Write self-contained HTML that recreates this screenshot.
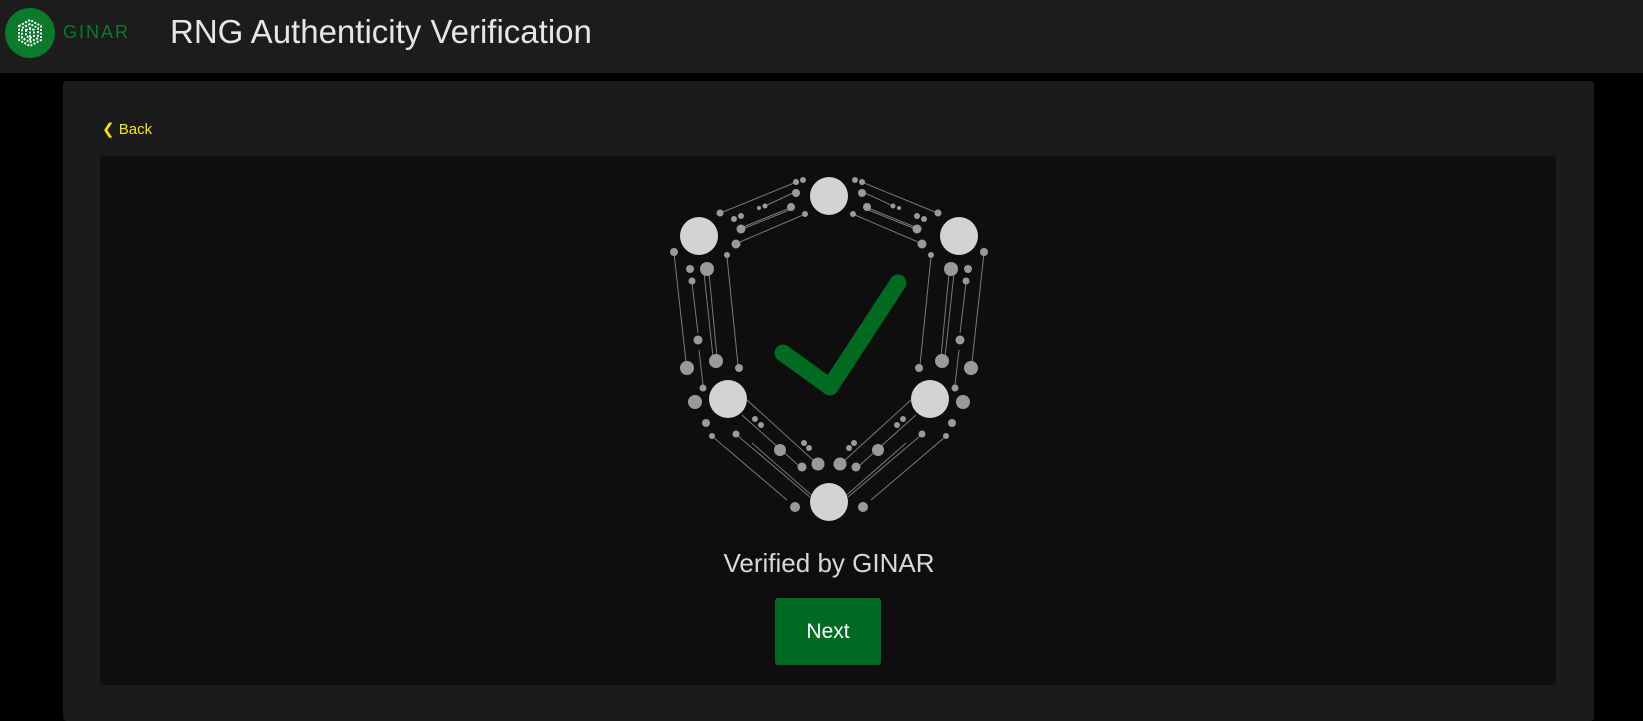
<!DOCTYPE html>
<html><head><style>
body{margin:0;width:1643px;height:716px;background:#000;overflow:hidden;font-family:"Liberation Sans",Roboto,sans-serif;position:relative}
.hdr{position:absolute;left:0;top:0;width:1643px;height:73px;background:#1c1c1c}
.logo{position:absolute;left:5px;top:8px;width:50px;height:50px;border-radius:50%;background:#0b7a2a}
.gin{position:absolute;left:63px;top:22px;color:#0b7a2a;font-size:18px;letter-spacing:2px}
.title{position:absolute;left:170px;top:13px;color:#e6e6e6;font-size:33px}
.panel{position:absolute;left:63px;top:81px;width:1531px;height:640px;background:#1b1b1b;border-radius:4px}
.back{position:absolute;left:102px;top:120px;color:#f5e400;font-size:15px}
.inner{position:absolute;left:100px;top:156px;width:1456px;height:529px;background:#0e0e0e;border-radius:4px}
.ver{position:absolute;left:0;width:1658px;top:548px;text-align:center;color:#d8d8d8;font-size:26px}
.btn{position:absolute;left:775px;top:598px;width:106px;height:67px;background:#006b22;border-radius:3px;color:#fff;font-size:21px;text-align:center;line-height:67px}
</style></head><body>
<div class="hdr">
<div class="logo"><svg width="50" height="50" viewBox="0 0 50 50"><g stroke="#fff" stroke-width="2" stroke-dasharray="2 1.5" fill="none"><path d="M14 18 L25 12 L36 18 L36 32 L25 38 L14 32Z"/><path d="M17 20 L25 16 L33 20 L33 30 L25 34 L17 30Z"/><path d="M21 22 L25 20 L29 22 L29 28 L25 30 L21 28Z"/><path d="M25 20 V34"/></g></svg></div>
<div class="gin">GINAR</div>
<div class="title">RNG Authenticity Verification</div>
</div>
<div class="panel"></div>
<div class="back">&#10094; Back</div>
<div class="inner"></div>
<svg style="position:absolute;left:0;top:0" width="1643" height="716">
<defs><g id="h">
<g stroke="#7a7a7a" stroke-width="1" fill="none">
<path d="M723 212L794 183M743 227L790 208M745 228L792 209M740 242L803 215M765 206L793 193M674 253L686 362M692 283L698 333M704 273L713 357M709 273L717 357M727 257L738 365M699 350L703 385M747 400L813 460M742 415L798 465M713 437L787 500M738 436L810 497M752 443L817 500"/>
</g>
<g fill="#9a9a9c">
<circle cx="803" cy="180" r="3"/><circle cx="796" cy="182" r="3"/><circle cx="796" cy="193" r="4"/><circle cx="791" cy="207" r="4"/><circle cx="805" cy="214" r="3"/><circle cx="765" cy="206" r="2.5"/><circle cx="759" cy="208" r="2"/><circle cx="741" cy="229" r="4.5"/><circle cx="736" cy="244" r="4.5"/><circle cx="741" cy="216" r="3"/><circle cx="734" cy="219" r="3"/><circle cx="720" cy="213" r="3.5"/><circle cx="674" cy="252" r="4"/><circle cx="690" cy="269" r="4"/><circle cx="707" cy="269" r="7"/><circle cx="692" cy="281" r="3.5"/><circle cx="727" cy="255" r="3"/><circle cx="698" cy="340" r="4.5"/><circle cx="687" cy="368" r="7"/><circle cx="716" cy="361" r="7"/><circle cx="739" cy="368" r="4"/><circle cx="703" cy="388" r="3.5"/><circle cx="695" cy="402" r="7"/><circle cx="706" cy="423" r="4"/><circle cx="712" cy="436" r="3"/><circle cx="736" cy="434" r="3.5"/><circle cx="755" cy="419" r="3"/><circle cx="761" cy="425" r="3"/><circle cx="780" cy="450" r="6"/><circle cx="802" cy="467" r="4.5"/><circle cx="818" cy="464" r="6.5"/><circle cx="804" cy="443" r="3"/><circle cx="809" cy="448" r="3"/><circle cx="795" cy="507" r="5"/>
</g>
<g fill="#d3d3d5"><circle cx="699" cy="236" r="19"/><circle cx="728" cy="399" r="19"/></g>
</g></defs>
<use href="#h"/>
<g transform="translate(1658,0) scale(-1,1)"><use href="#h"/></g>
<circle cx="829" cy="196" r="19" fill="#d3d3d5"/>
<circle cx="829" cy="502" r="19" fill="#d3d3d5"/>
<path d="M783 353L830 387L898 283" stroke="#026b22" stroke-width="17" fill="none" stroke-linecap="round" stroke-linejoin="round"/>
</svg>
<div class="ver">Verified by GINAR</div>
<div class="btn">Next</div>
</body></html>
